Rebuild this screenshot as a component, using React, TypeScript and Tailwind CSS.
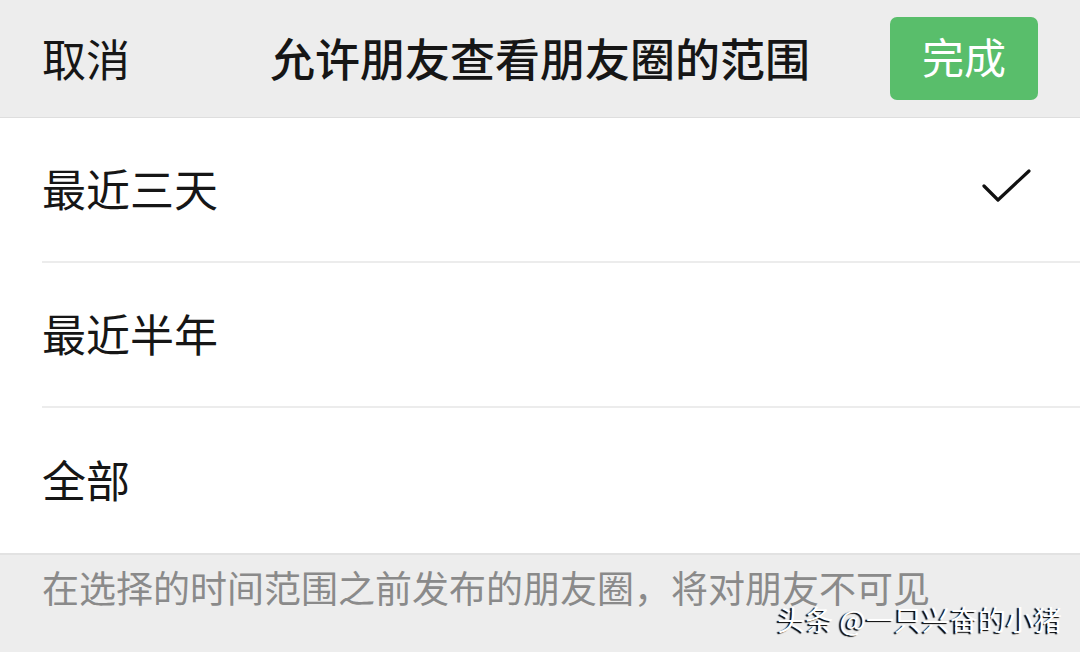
import { useState } from "react";

const ranges = ["最近三天", "最近半年", "全部"];

function CheckMark() {
  return (
    <svg width="50" height="36" viewBox="0 0 50 36" fill="none">
      <polyline
        points="2,17 16,31 47,2"
        stroke="#111"
        strokeWidth="3.2"
        strokeLinecap="round"
        strokeLinejoin="round"
      />
    </svg>
  );
}

function App() {
  const [selected, setSelected] = useState(0);

  return (
    <div className="relative w-[1080px] h-[652px] overflow-hidden bg-[#ededed] font-['Noto_Sans_CJK_SC','Noto_Sans',sans-serif] text-[#161616]">
      {/* top bar */}
      <div className="h-[118px] grid grid-cols-[1fr_auto_1fr] items-center border-b border-[#dedede]">
        <button className="justify-self-start pl-[42px] pb-[2px] text-[44px] leading-none">取消</button>
        <h1 className="text-[45px] font-medium leading-none pb-[2px]">允许朋友查看朋友圈的范围</h1>
        <div className="justify-self-end pr-[42px]">
          <button className="w-[148px] h-[83px] pb-[5px] rounded-[7px] bg-[#59be6b] text-white text-[42px] leading-none">
            完成
          </button>
        </div>
      </div>

      {/* options */}
      <div className="bg-white pl-[42px]">
        {ranges.map((label, i) => (
          <div
            key={label}
            onClick={() => setSelected(i)}
            className={
              i < ranges.length - 1
                ? "h-[145px] flex items-center justify-between pr-[48px] border-b-2 border-[#ececec]"
                : "h-[145px] flex items-center justify-between pr-[48px]"
            }
          >
            <span className="text-[44px] leading-none -mt-[4px]">{label}</span>
            {selected === i && (
              <span className="-mt-[6px]">
                <CheckMark />
              </span>
            )}
          </div>
        ))}
      </div>

      {/* footer note */}
      <div className="border-t-2 border-[#e2e2e2] pl-[42px] pt-[14px]">
        <p className="text-[37px] leading-none text-[#8a8a8a]">在选择的时间范围之前发布的朋友圈，将对朋友不可见</p>
      </div>

      <div className="absolute right-[18px] bottom-[19px] text-[28px] leading-none text-white [text-shadow:-2px_1px_1px_#000]">
        头条 @一只兴奋的小猪
      </div>
    </div>
  );
}

export default App;
